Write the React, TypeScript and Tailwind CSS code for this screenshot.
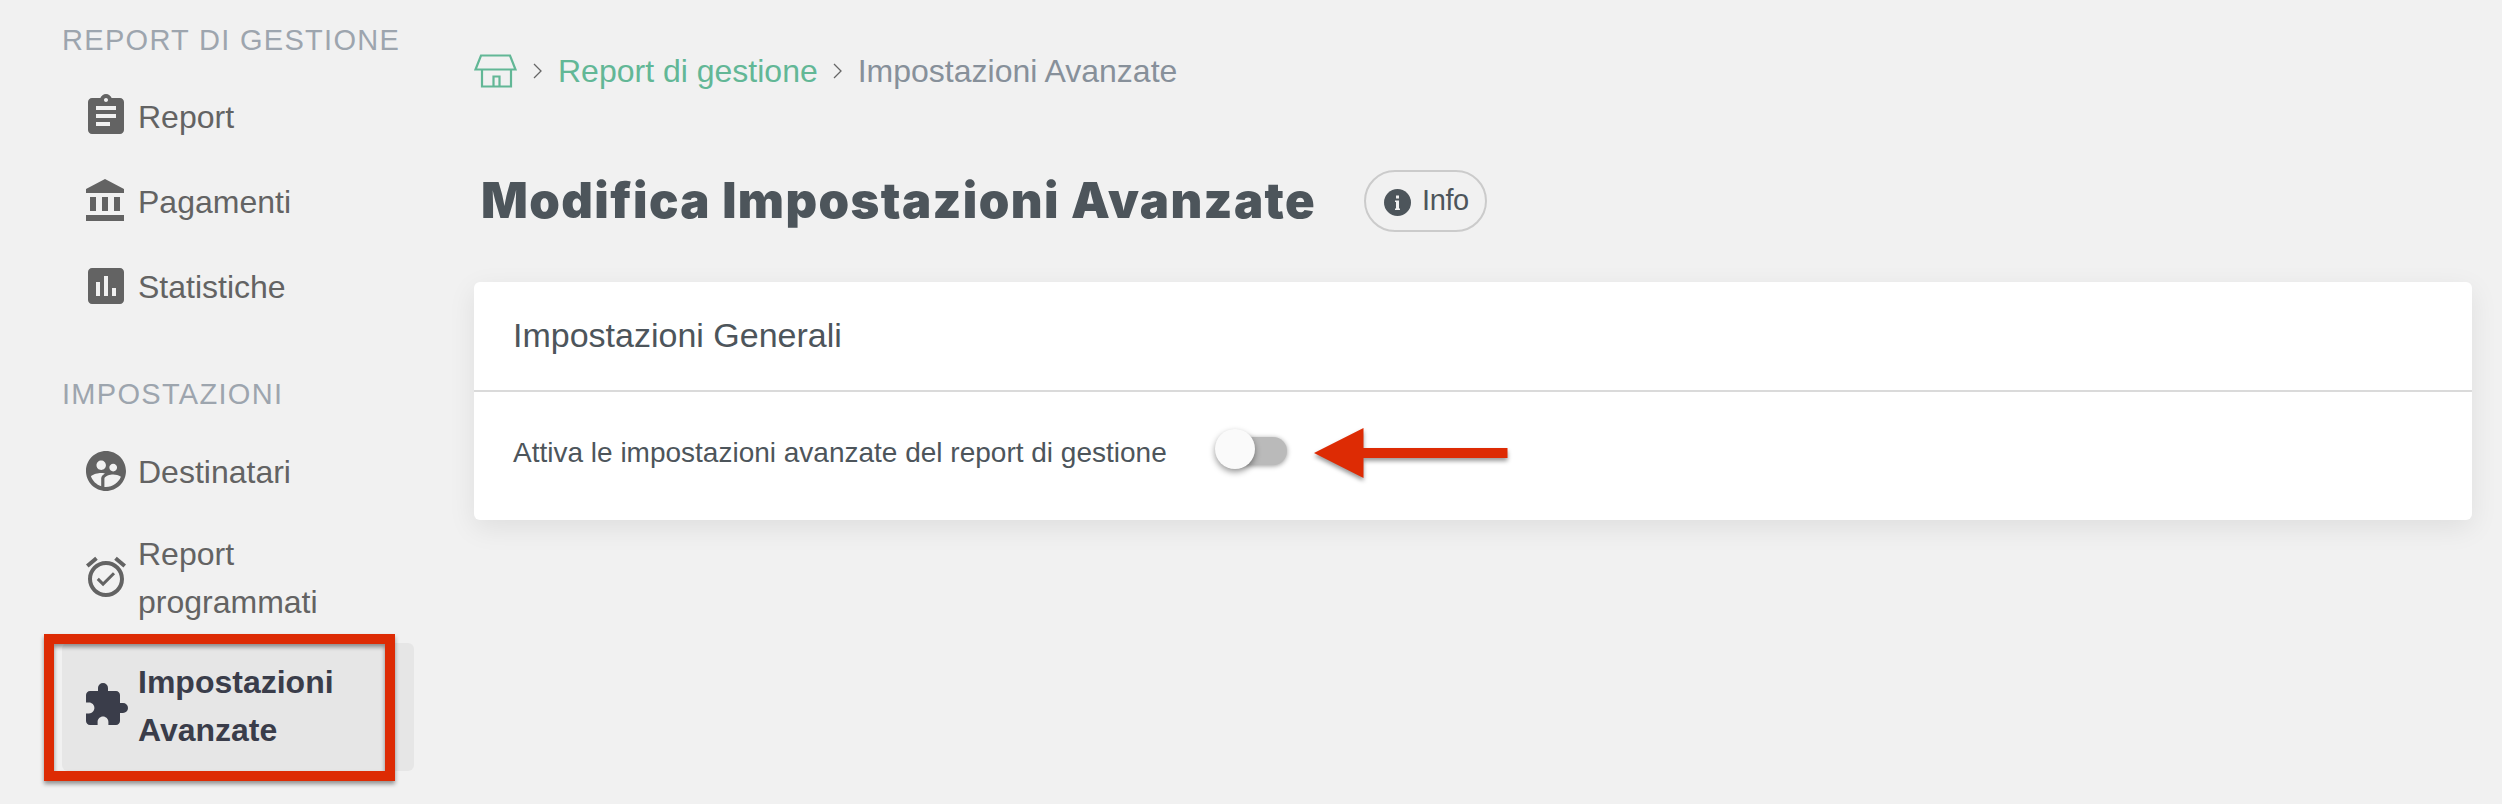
import React from 'react'
import { MdAssignment, MdAssessment, MdSupervisedUserCircle, MdAlarmOn, MdExtension } from 'react-icons/md'

interface NavItem {
  label: string
  icon: React.ComponentType<{ className?: string }>
  tall?: boolean
  active?: boolean
}

const BankIcon = ({ className }: { className?: string }) => (
  <svg viewBox="0 0 24 24" fill="currentColor" className={className}>
    <path d="M4 10v7h3v-7H4zm6 0v7h3v-7h-3zM2 22h19v-3H2v3zm14-12v7h3v-7h-3zm-4.500-9L2 6v2h19V6l-9.500-5z" />
  </svg>
)

const reportItems: NavItem[] = [
  { label: 'Report', icon: MdAssignment },
  { label: 'Pagamenti', icon: BankIcon },
  { label: 'Statistiche', icon: MdAssessment },
]

const settingsItems: NavItem[] = [
  { label: 'Destinatari', icon: MdSupervisedUserCircle },
  { label: 'Report programmati', icon: MdAlarmOn, tall: true },
  { label: 'Impostazioni Avanzate', icon: MdExtension, tall: true, active: true },
]

const NavLink = ({ item }: { item: NavItem }) => {
  const Icon = item.icon
  return (
    <a
      href="#"
      className={`flex items-center pl-5 pr-12 rounded-md text-[32px] leading-[48px] ${item.tall ? 'h-32' : 'h-[85px]'} ${item.active ? 'bg-[#e6e6e6] text-[#3a3d4a] font-bold' : 'text-[#636363]'}`}
    >
      <Icon className={`w-12 h-12 shrink-0 ${item.active ? 'mb-[5px]' : 'mb-1'}`} />
      <span className={`ml-2 ${item.tall ? 'mb-0.5' : 'mb-px'}`}>{item.label}</span>
    </a>
  )
}

const StoreIcon = () => (
  <svg width="43" height="34" viewBox="0 0 43 34" fill="none" stroke="#62b796" strokeWidth="2.2">
    <path d="M7 1.500h29l5.500 14H1.500z M8 15.500v17h29v-17 M19.500 32v-9.500h6v9.500" />
  </svg>
)

const Chevron = () => (
  <svg width="9" height="16" viewBox="0 0 9 16" fill="none" stroke="#666" strokeWidth="1.3">
    <path d="M1 1l7 7-7 7" />
  </svg>
)

export default function App() {
  return (
    <div className="flex h-[804px] w-full overflow-hidden bg-[#f1f1f1] font-['Liberation_Sans',Arial,sans-serif]">
      <aside className="w-[414px] shrink-0 pl-[62px]">
        <h2 className="mt-5 h-10 text-[29px] leading-10 tracking-[1.3px] whitespace-nowrap text-[#9da5ae]">REPORT DI GESTIONE</h2>
        <nav className="mt-[15px]">
          {reportItems.map((item) => <NavLink key={item.label} item={item} />)}
        </nav>
        <h2 className="mt-[44px] h-10 text-[29px] leading-10 tracking-[1.3px] whitespace-nowrap text-[#9da5ae]">IMPOSTAZIONI</h2>
        <nav className="relative mt-4">
          {settingsItems.map((item) => <NavLink key={item.label} item={item} />)}
          <div className="absolute -left-[18px] bottom-[-10px] h-[147px] w-[351px] border-[10px] border-[#dd2b04] drop-shadow-[0_3px_2px_rgba(0,0,0,0.4)]" />
        </nav>
      </aside>

      <main className="flex-1 pl-[60px] pr-[30px]">
        <div className="mt-[51px] flex h-10 items-center text-[32px] leading-10">
          <StoreIcon />
          <span className="ml-[16px]"><Chevron /></span>
          <a href="#" className="ml-[16px] text-[#62b796]">Report di gestione</a>
          <span className="ml-[15px]"><Chevron /></span>
          <span className="ml-[16px] text-[#87909a]">Impostazioni Avanzate</span>
        </div>

        <div className="mt-[79px] flex h-[62px] items-center">
          <h1 className="ml-[7px] w-[883px] whitespace-nowrap font-[Inter,sans-serif] text-[49px] font-black tracking-[1.4px] text-[#4d555b]">Modifica Impostazioni Avanzate</h1>
          <button className="flex h-[62px] w-[123px] items-center rounded-full border-2 border-[#cbcbcb] pl-[18px] text-[29px] text-[#4d555b]">
            <svg width="27" height="27" viewBox="0 0 27 27" className="mt-[3px]">
              <circle cx="13.500" cy="13.500" r="13.500" fill="currentColor" />
              <path d="M12 6.500h3v3h-3z M11 11.500h4v8h1v1.500h-5v-1.500h1v-6.500h-1z" fill="#f1f1f1" />
            </svg>
            <span className="mb-px ml-[11px] tracking-[-0.4px]">Info</span>
          </button>
        </div>

        <section className="mt-[50px] h-[238px] rounded-md bg-white text-[#4d555b] shadow-[0_8px_28px_rgba(0,0,0,0.08)]">
          <h3 className="flex h-[110px] items-center border-b-2 border-[#dadada] pb-0.5 pl-[39px] text-[34px]">Impostazioni Generali</h3>
          <div className="flex h-[122px] items-center pl-[39px]">
            <span className="w-[702px] whitespace-nowrap text-[28px]">Attiva le impostazioni avanzate del report di gestione</span>
            <button role="switch" aria-checked="false" className="relative mb-1 h-7 w-[72px]">
              <span className="absolute top-0 right-0 h-7 w-[62px] rounded-full bg-[#bababa] shadow-[0_1px_5px_rgba(0,0,0,0.4)]" />
              <span className="absolute -top-2 left-0 size-10 rounded-full bg-[#fafafa] shadow-[0_3px_6px_rgba(0,0,0,0.4)]" />
            </button>
            <svg width="194" height="50" viewBox="0 0 194 50" className="mb-px ml-[27px] overflow-visible drop-shadow-[0_3px_2px_rgba(0,0,0,0.4)]">
              <path d="M0 25L49.500 0v20H193.500v10H49.500v20z" fill="#dd2b04" />
            </svg>
          </div>
        </section>
      </main>
    </div>
  )
}
